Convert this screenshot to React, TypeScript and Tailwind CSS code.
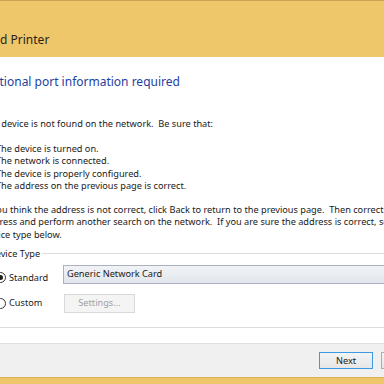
import React from "react";

const bullets = [
  "The device is turned on.",
  "The network is connected.",
  "The device is properly configured.",
  "The address on the previous page is correct.",
];

function Radio({ checked }: { checked?: boolean }) {
  return (
    <span className="w-[11px] h-[11px] rounded-full border border-[#333] bg-white flex items-center justify-center shrink-0">
      {checked && <span className="w-[5px] h-[5px] rounded-full bg-[#222]" />}
    </span>
  );
}

export default function App() {
  return (
    <div className="w-[384px] h-[384px] overflow-hidden flex flex-col bg-white font-['Noto_Sans',sans-serif] text-[#1a1a1a]">
      {/* Title bar */}
      <div className="h-[57px] shrink-0 bg-[#efc76b] border-t border-[#c8a458] flex items-end pb-[9px]">
        <span className="-ml-[15px] text-[12px] leading-[16px] text-[#2a2416] whitespace-nowrap">
          Add Printer
        </span>
      </div>

      {/* Body */}
      <div className="flex-1 flex flex-col -ml-[17px] whitespace-nowrap">
        <div className="mt-[17px] -ml-[9px] text-[12px] leading-[16px] text-[#1e3f9f]">
          Additional port information required
        </div>

        <p className="mt-[28px] text-[9.2px] leading-[12.5px]">
          The device is not found on the network.&nbsp; Be sure that:
        </p>

        <ul className="mt-[12.5px] pl-[3px] text-[9.2px] leading-[12.4px]">
          {bullets.map((b) => (
            <li key={b} className="flex">
              <span className="w-[10px] shrink-0">•</span>
              <span>{b}</span>
            </li>
          ))}
        </ul>

        <p className="mt-[11px] text-[9.2px] leading-[12.5px]">
          If you think the address is not correct, click Back to return to the previous page.&nbsp; Then correct the
          <br />
          address and perform another search on the network.&nbsp; If you are sure the address is correct, select the
          <br />
          device type below.
        </p>

        <fieldset className="mt-[6.5px] w-[420px] border border-[#dcdcdc] pb-[14px] pl-[12px]">
          <legend className="-ml-[9px] px-[2px] text-[9.2px] leading-[12px]">Device Type</legend>

          <div className="flex items-start mt-[5px]">
            <div className="flex items-center gap-[3px] w-[68px] mt-[7px] -ml-[1px] shrink-0">
              <Radio checked />
              <span className="text-[9.2px] leading-[12px]">Standard</span>
            </div>
            <div className="flex-1 h-[19px] border border-[#aab2c2] bg-gradient-to-b from-[#f1f3f6] to-[#e2e6ec] flex items-center pl-[3px] text-[9.2px]">
              Generic Network Card
            </div>
          </div>

          <div className="flex items-center mt-[10px]">
            <div className="flex items-center gap-[3px] w-[69px] -ml-[1px] shrink-0">
              <Radio />
              <span className="text-[9.2px] leading-[12px]">Custom</span>
            </div>
            <div className="w-[71px] h-[19px] border border-[#d9d9d9] bg-[#f4f4f4] flex items-center justify-center text-[9.2px] text-[#a0a0a0]">
              Settings...
            </div>
          </div>
        </fieldset>
      </div>

      {/* Footer */}
      <div className="h-[34px] shrink-0 bg-[#f0f0f0] border-t border-[#dfdfdf] flex items-center pl-[319px] gap-[8px]">
        <div className="w-[54px] h-[17px] shrink-0 border border-[#3c99e4] bg-gradient-to-b from-[#f4f4f4] to-[#e6e6e6] flex items-center justify-center text-[9.2px]">
          Next
        </div>
        <div className="w-[54px] h-[17px] shrink-0 border border-[#adadad] bg-gradient-to-b from-[#f4f4f4] to-[#e6e6e6] flex items-center justify-center text-[9.2px]">
          Cancel
        </div>
      </div>

      {/* Bottom frame */}
      <div className="h-[7px] shrink-0 bg-[#efc76b] border-t border-[#d9ad55]" />
    </div>
  );
}
